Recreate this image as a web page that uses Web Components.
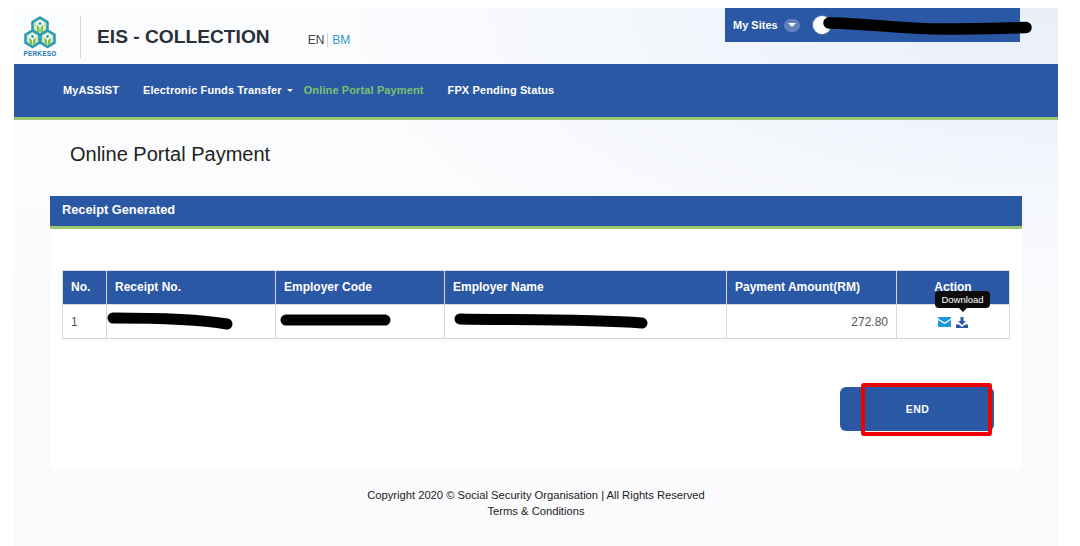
<!DOCTYPE html>
<html>
<head>
<meta charset="utf-8">
<title>EIS - Collection</title>
<style>
  html, body { margin: 0; padding: 0; background: #fff; }
  body { font-family: "Liberation Sans", Arial, sans-serif; color: #222; overflow: hidden; }
</style>
</head>
<body>
<eis-app>
  <eis-header slot="header"></eis-header>
  <eis-nav slot="nav">
    <a href="#">MyASSIST</a>
    <a href="#" data-caret>Electronic Funds Transfer</a>
    <a href="#" data-active>Online Portal Payment</a>
    <a href="#">FPX Pending Status</a>
  </eis-nav>
  <page-title slot="title">Online Portal Payment</page-title>
  <eis-panel slot="panel" heading="Receipt Generated">
    <receipt-table></receipt-table>
    <end-button>END</end-button>
  </eis-panel>
  <eis-footer slot="footer"></eis-footer>
</eis-app>

<script>
class EisApp extends HTMLElement {
  constructor() {
    super();
    this.attachShadow({ mode: "open" });
  }
  connectedCallback() {
    this.shadowRoot.innerHTML = `
      <style>
        :host { display: block; }
        .wrap {
          margin: 8px 22px 0 14px;
          height: 538px;
          display: flex;
          flex-direction: column;
          background:
            radial-gradient(ellipse 720px 300px at 100% 0, #e9eff9 0%, rgba(233,239,249,0) 100%),
            linear-gradient(#fbfcfe, #fbfbfd);
        }
      </style>
      <div class="wrap">
        <slot name="header"></slot>
        <slot name="nav"></slot>
        <slot name="title"></slot>
        <slot name="panel"></slot>
        <slot name="footer"></slot>
      </div>`;
  }
}

class EisHeader extends HTMLElement {
  constructor() {
    super();
    this.attachShadow({ mode: "open" });
  }
  connectedCallback() {
    this.shadowRoot.innerHTML = `
      <style>
        :host { display: block; height: 56px; position: relative; }
        .row { display: flex; height: 100%; align-items: flex-start; }
        .logo { width: 34px; margin: 8px 0 0 9px; display: flex; flex-direction: column; align-items: center; }
        .logo svg { display: block; }
        .logo span { font-size: 6.500px; font-weight: bold; color: #2a78b0; line-height: 7px; margin-top: 1px; letter-spacing: .2px; }
        .divider { width: 1px; height: 42px; background: #d5d8dc; margin: 8px 16px 0 23px; }
        h1 { margin: 17px 0 0; font-size: 19.200px; line-height: 24px; font-weight: bold; color: #2b2f36; }
        .lang { margin: 25px 0 0 38px; font-size: 12px; line-height: 14px; display: flex; }
        .lang .en { color: #444; padding-right: 3px; border-right: 1px solid #cdd3da; }
        .lang .bm { color: #2a9ad0; padding-left: 4px; }
        .user {
          position: absolute; left: 711px; top: 0; width: 295px; height: 34px;
          background: #2b58a4; color: #fff; display: flex; align-items: center;
          font-size: 11px; font-weight: bold; padding-left: 8px; box-sizing: border-box;
        }
        .chev { width: 16px; height: 13px; border-radius: 7px; background: #5f7fbd; margin-left: 6px; display: flex; align-items: center; justify-content: center; }
        .chev::after { content: ""; border: 4px solid transparent; border-top: 4px solid #fff; border-bottom: 0; }
        .avatar { width: 18px; height: 18px; border-radius: 50%; background: #fff; margin-left: 13px; box-shadow: 0 0 2px #bcd0ee; }
        .scribble { position: absolute; left: 800px; top: 6px; }
      </style>
      <div class="row">
        <div class="logo">
          <svg width="32" height="33" viewBox="0 0 32 33">
            <g fill="#cfe8b8" stroke="#2b9bb5" stroke-width="2.600" stroke-linejoin="round">
              <path d="M16 1.500l7.500 4.500v8.500L16 19 8.500 14.500V6z"/>
              <path d="M8.500 14.500l7 4.200v8L8.500 31 1.500 26.700v-8z"/>
              <path d="M23.500 14.500l7 4.200v8l-7 4.300-7-4.300v-8z"/>
            </g>
            <g fill="#fff">
              <circle cx="16" cy="9" r="4"/><circle cx="8.500" cy="22" r="4"/><circle cx="23.500" cy="22" r="4"/>
            </g>
            <g fill="#7fbf4d">
              <path d="M12.500 8l3 3v5h-2zM19.500 8l-3 3v5h2z"/>
              <path d="M5 21l3 3v4.500H6zM12 21l-3 3v4.500h2z"/>
              <path d="M20 21l3 3v4.500h-2zM27 21l-3 3v4.500h2z"/>
            </g>
            <g fill="#2b9bb5">
              <circle cx="16" cy="7.500" r="1.500"/><circle cx="8.500" cy="20.500" r="1.500"/><circle cx="23.500" cy="20.500" r="1.500"/>
            </g>
          </svg>
          <span>PERKESO</span>
        </div>
        <div class="divider"></div>
        <h1>EIS - COLLECTION</h1>
        <div class="lang"><span class="en">EN</span><span class="bm">BM</span></div>
      </div>
      <div class="user">
        <span>My Sites</span><span class="chev"></span><span class="avatar"></span>
      </div>
      <svg class="scribble" width="225" height="26" viewBox="0 0 225 26" aria-hidden="true">
        <path d="M15 9C60 10 90 15 130 15C165 15 190 14 212 13.500" fill="none" stroke="#000" stroke-width="11.500" stroke-linecap="round"/>
      </svg>`;
  }
}

class EisNav extends HTMLElement {
  constructor() {
    super();
    this.attachShadow({ mode: "open" });
  }
  connectedCallback() {
    // style the slotted links from the user's markup
    this.shadowRoot.innerHTML = `
      <style>
        :host {
          display: flex; align-items: center; padding: 0 0 2px 49px;
          height: 51px;
          background: #2b58a4; border-bottom: 3px solid #9bc66f; gap: 24px;
          font-size: 11px; font-weight: bold;
        }
        ::slotted(a) { color: #fff; text-decoration: none; letter-spacing: .12px; white-space: nowrap; }
        ::slotted(a[data-active]) { color: #7fc06e; margin-left: -13px; }
        ::slotted(a[data-caret])::after {
          content: ""; display: inline-block; margin-left: 5px; vertical-align: 2px;
          border: 3px solid transparent; border-top: 3px solid #fff; border-bottom: 0;
        }
      </style>
      <slot></slot>`;
  }
}

class PageTitle extends HTMLElement {
  constructor() {
    super();
    this.attachShadow({ mode: "open" });
  }
  connectedCallback() {
    this.shadowRoot.innerHTML = `
      <style>
        :host { display: flex; align-items: center; height: 76px; padding-left: 56px; font-size: 20px; color: #222; padding-bottom: 8px; box-sizing: border-box; }
      </style>
      <slot></slot>`;
  }
}

class EisPanel extends HTMLElement {
  constructor() {
    super();
    this.attachShadow({ mode: "open" });
  }
  connectedCallback() {
    this.shadowRoot.innerHTML = `
      <style>
        :host { display: block; margin: 0 36px; background: #fff; }
        header {
          height: 30px; background: #2b58a4; color: #fff; border-bottom: 3px solid #9bc66f;
          font-size: 12.800px; font-weight: bold; line-height: 28px; padding-left: 12px;
        }
        .body { padding: 41px 12px 0; height: 200px; }
      </style>
      <header>${this.getAttribute("heading")}</header>
      <div class="body"><slot></slot></div>`;
  }
}

class ReceiptTable extends HTMLElement {
  constructor() {
    super();
    this.attachShadow({ mode: "open" });
  }
  connectedCallback() {
    const heads = ["No.", "Receipt No.", "Employer Code", "Employer Name", "Payment Amount(RM)", "Action"];
    this.shadowRoot.innerHTML = `
      <style>
        :host { display: block; position: relative; font-size: 12px; }
        table { border-collapse: collapse; table-layout: fixed; width: 947px; }
        th {
          background: #2b58a4; color: #fff; height: 34px; padding: 0 8px 1px; text-align: left;
          border: 1px solid #d5d9de; font-weight: bold; box-sizing: border-box;
        }
        th:last-child { text-align: center; }
        td { height: 34px; padding: 0 8px; border: 1px solid #d5d9de; color: #555; background: #fff; box-sizing: border-box; }
        .amount { text-align: right; }
        .icons { display: flex; justify-content: center; gap: 5px; padding-top: 1px; }
        .tip {
          position: absolute; left: 873px; top: 21px; width: 55px; height: 17px; border-radius: 4px;
          background: #0c0c0c; color: #fff; font-size: 9.500px; line-height: 17px; text-align: center;
        }
        .tip::after {
          content: ""; position: absolute; left: 24px; top: 17px;
          border: 4px solid transparent; border-top: 4px solid #0c0c0c; border-bottom: 0;
        }
        .scribbles { position: absolute; left: 0; top: 34px; pointer-events: none; }
      </style>
      <table>
        <colgroup>
          <col style="width:44px"><col style="width:169px"><col style="width:169px">
          <col style="width:282px"><col style="width:170px"><col style="width:113px">
        </colgroup>
        <tr>${heads.map(h => `<th>${h}</th>`).join("")}</tr>
        <tr>
          <td>1</td><td></td><td></td><td></td>
          <td class="amount">272.80</td>
          <td class="action"><div class="icons">
            <svg width="13" height="10" viewBox="0 0 13 10">
              <path d="M1 0h11a1 1 0 0 1 1 1v.6L6.500 5.600 0 1.600V1a1 1 0 0 1 1-1z" fill="#1b97dc"/>
              <path d="M0 3l6.500 4L13 3v6a1 1 0 0 1-1 1H1a1 1 0 0 1-1-1z" fill="#1b97dc"/>
            </svg>
            <svg width="12" height="11" viewBox="0 0 12 11">
              <path d="M4.500 0h3v4h2.500L6 8 2 4h2.500z" fill="#2b58a4"/>
              <path d="M0 7.500h3L6 10l3-2.500h3V11H0z" fill="#2b58a4"/>
            </svg>
          </div></td>
        </tr>
      </table>
      <div class="tip">Download</div>
      <svg class="scribbles" width="640" height="34" viewBox="0 0 640 34" aria-hidden="true">
        <g fill="none" stroke="#000" stroke-linecap="round">
          <path d="M51 14C90 14 135 15 165 20" stroke-width="11"/>
          <path d="M224 16H323" stroke-width="11"/>
          <path d="M398 15C450 16 530 15 580 19" stroke-width="11"/>
        </g>
      </svg>`;
  }
}

class EndButton extends HTMLElement {
  constructor() {
    super();
    this.attachShadow({ mode: "open" });
  }
  connectedCallback() {
    this.shadowRoot.innerHTML = `
      <style>
        :host { display: block; width: 154px; margin: 48px 0 0 778px; position: relative; }
        button {
          display: block; width: 154px; height: 44px; border: 0; border-radius: 6px;
          background: #2b58a4; color: #fff; font: bold 10.500px "Liberation Sans", Arial, sans-serif;
          letter-spacing: .5px; padding: 0 0 0 1px; margin: 0; box-sizing: border-box;
        }
        .mark {
          position: absolute; left: 21px; top: -4px; width: 131px; height: 53px;
          border: 4px solid #ee0000; border-radius: 3px; box-sizing: border-box;
        }
      </style>
      <button><slot></slot></button>
      <div class="mark"></div>`;
  }
}

class EisFooter extends HTMLElement {
  constructor() {
    super();
    this.attachShadow({ mode: "open" });
  }
  connectedCallback() {
    this.shadowRoot.innerHTML = `
      <style>
        :host { display: block; text-align: center; font-size: 11.200px; line-height: 16px; color: #222; padding-top: 17px; }
        a { color: inherit; text-decoration: none; }
      </style>
      <div>Copyright 2020 &copy; Social Security Organisation | All Rights Reserved</div>
      <div><a href="#">Terms &amp; Conditions</a></div>`;
  }
}

customElements.define("eis-app", EisApp);
customElements.define("eis-header", EisHeader);
customElements.define("eis-nav", EisNav);
customElements.define("page-title", PageTitle);
customElements.define("eis-panel", EisPanel);
customElements.define("receipt-table", ReceiptTable);
customElements.define("end-button", EndButton);
customElements.define("eis-footer", EisFooter);
</script>
</body>
</html>
